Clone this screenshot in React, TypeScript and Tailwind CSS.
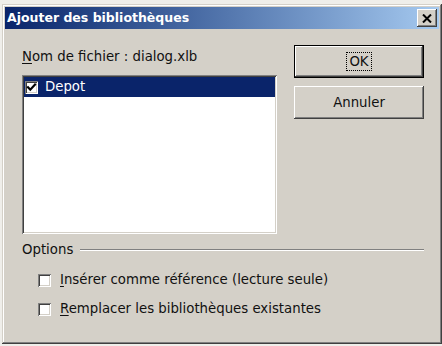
import React from "react";

const bevelOut =
  "shadow-[inset_-1px_-1px_0_#404040,inset_1px_1px_0_#ffffff,inset_-2px_-2px_0_#808080,inset_2px_2px_0_#d4d0c8]";
const sunken =
  "shadow-[inset_1px_1px_0_#808080,inset_-1px_-1px_0_#ffffff,inset_2px_2px_0_#404040,inset_-2px_-2px_0_#d4d0c8]";

function CheckBox({ checked }: { checked?: boolean }) {
  return (
    <div className={`w-[13px] h-[13px] bg-white shrink-0 flex items-center justify-center ${sunken}`}>
      {checked && (
        <svg width="13" height="13" viewBox="0 0 13 13">
          <path d="M3 6.2 L5.3 8.7 L10 3.6" fill="none" stroke="#000" strokeWidth="2.2" strokeLinecap="square" />
        </svg>
      )}
    </div>
  );
}

export default function App() {
  return (
    <div className="w-[442px] h-[346px] bg-[#efeeea] pt-[4px] pl-[2px] overflow-hidden font-['DejaVu_Sans',sans-serif] text-[13.3px] text-[#111]">
      <div
        className={`w-[440px] h-[340px] bg-[#d4d0c8] p-[3px] flex flex-col shadow-[inset_-1px_-1px_0_#404040,inset_1px_1px_0_#d4d0c8,inset_-2px_-2px_0_#808080,inset_2px_2px_0_#ffffff]`}
      >
        {/* Title bar */}
        <div className="h-[22px] shrink-0 bg-linear-to-r from-[#0a246a] to-[#a6caf0] flex items-center justify-between pl-[2px] pr-[2px]">
          <span className="text-white font-bold text-[12.5px] leading-none">Ajouter des bibliothèques</span>
          <div className={`w-[20px] h-[18px] bg-[#d4d0c8] flex items-center justify-center ${bevelOut}`}>
            <svg width="10" height="9" viewBox="0 0 10 9">
              <path d="M1 0.5 L9 8.5 M9 0.5 L1 8.5" stroke="#000" strokeWidth="2" />
            </svg>
          </div>
        </div>

        {/* Body */}
        <div className="flex-1 flex flex-col pl-[17px] pr-[15px]">
          <div className="flex pt-[16px]">
            <div className="flex flex-col mt-[4px] w-[255px]">
              <div className="leading-[16px] h-[16px]">
                <span className="underline underline-offset-2">N</span>om de fichier : dialog.xlb
              </div>
              <div className={`mt-[10px] h-[159px] bg-white p-[2px] ${sunken}`}>
                <div className="h-[20px] bg-[#0a246a] flex items-center pl-[1px]">
                  <CheckBox checked />
                  <span className="ml-[7px] text-white leading-none">Depot</span>
                </div>
              </div>
            </div>
            <div className="ml-[17px] w-[130px] flex flex-col gap-[8px]">
              <div className="h-[33px] bg-black p-[1px]">
                <div className={`w-full h-full bg-[#d4d0c8] flex items-center justify-center ${bevelOut}`}>
                  <span className="border border-dotted border-black px-[2px] py-[2px] leading-none">OK</span>
                </div>
              </div>
              <div className={`h-[33px] bg-[#d4d0c8] flex items-center justify-center ${bevelOut}`}>
                <span className="leading-none">Annuler</span>
              </div>
            </div>
          </div>

          {/* Options */}
          <div className="mt-[8px] h-[16px] flex items-center">
            <span className="leading-[16px]">Options</span>
            <div className="ml-[7px] flex-1 h-[2px] border-t border-[#808080] border-b border-b-white" />
          </div>
          <div className="mt-[14px] flex flex-col gap-[13px] pl-[16px]">
            <div className="h-[16px] flex items-center">
              <CheckBox />
              <span className="ml-[9px] leading-none">
                <span className="underline underline-offset-2">I</span>nsérer comme référence (lecture seule)
              </span>
            </div>
            <div className="h-[16px] flex items-center">
              <CheckBox />
              <span className="ml-[9px] leading-none">
                <span className="underline underline-offset-2">R</span>emplacer les bibliothèques existantes
              </span>
            </div>
          </div>
        </div>
      </div>
    </div>
  );
}
